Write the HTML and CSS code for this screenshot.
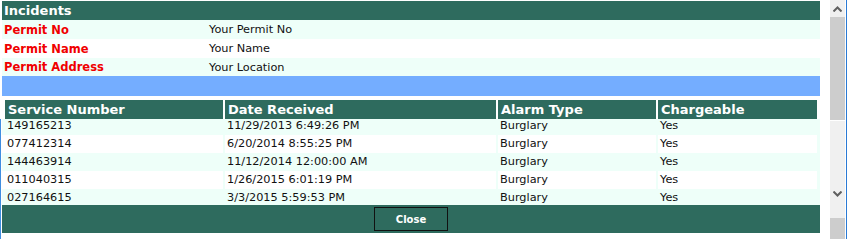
FILE: index.html
```html
<!DOCTYPE html>
<html>
<head>
<meta charset="utf-8">
<link rel="stylesheet" href="styles.css">
</head>
<body>
<div class="frame">
  <div class="panel">
    <div class="title">Incidents</div>
    <div class="info mint r1"><span class="label">Permit No</span><span class="value">Your Permit No</span></div>
    <div class="info r2"><span class="label">Permit Name</span><span class="value">Your Name</span></div>
    <div class="info mint r3"><span class="label">Permit Address</span><span class="value">Your Location</span></div>
    <div class="bluebar"></div>
    <div class="grid-head">
      <div class="hc c1">Service Number</div>
      <div class="hc c2">Date Received</div>
      <div class="hc c3">Alarm Type</div>
      <div class="hc c4">Chargeable</div>
    </div>
    <div class="grid-body">
      <div class="row mint"><div class="dc c1">149165213</div><div class="dc c2">11/29/2013 6:49:26 PM</div><div class="dc c3">Burglary</div><div class="dc c4">Yes</div></div>
      <div class="row white"><div class="dc c1">077412314</div><div class="dc c2">6/20/2014 8:55:25 PM</div><div class="dc c3">Burglary</div><div class="dc c4">Yes</div></div>
      <div class="row mint"><div class="dc c1">144463914</div><div class="dc c2">11/12/2014 12:00:00 AM</div><div class="dc c3">Burglary</div><div class="dc c4">Yes</div></div>
      <div class="row white"><div class="dc c1">011040315</div><div class="dc c2">1/26/2015 6:01:19 PM</div><div class="dc c3">Burglary</div><div class="dc c4">Yes</div></div>
      <div class="row mint"><div class="dc c1">027164615</div><div class="dc c2">3/3/2015 5:59:53 PM</div><div class="dc c3">Burglary</div><div class="dc c4">Yes</div></div>
    </div>
    <div class="footer"><button class="close">Close</button></div>
  </div>
  <div class="scrollbar">
    <div class="sb-btn"><svg width="9" height="6" viewBox="0 0 9 6"><path d="M0.5 5.5 L4.5 1.5 L8.5 5.5" fill="none" stroke="#606060" stroke-width="2"/></svg></div>
    <div class="sb-thumb"></div>
    <div class="sb-track"></div>
    <div class="sb-btn down"><svg width="9" height="6" viewBox="0 0 9 6"><path d="M0.5 0.5 L4.5 4.5 L8.5 0.5" fill="none" stroke="#606060" stroke-width="2"/></svg></div>
    <div class="sb-gap"></div>
    <div class="sb-thumb2"></div>
  </div>
</div>
</body>
</html>
```

FILE: styles.css
```css
html, body {
  margin: 0;
  padding: 0;
  background: #ffffff;
}
body {
  font-family: "DejaVu Sans", Verdana, sans-serif;
  font-size: 11px;
  color: #111;
  width: 847px;
  height: 239px;
  overflow: hidden;
  position: relative;
}
body::before {
  content: "";
  position: absolute;
  left: 0;
  top: 119px;
  width: 1px;
  height: 120px;
  background: #3f8ee0;
}
.frame {
  display: flex;
  align-items: flex-start;
  width: 846px;
  height: 239px;
  border-right: 1px solid #2a7ad5;
}
.panel {
  width: 818px;
  margin-left: 2px;
  margin-top: 1px;
  display: flex;
  flex-direction: column;
}
.title {
  height: 19px;
  background: #2e6b5e;
  color: #ffffff;
  font-weight: bold;
  font-size: 13px;
  line-height: 19px;
  padding-left: 2px;
}
.info {
  display: flex;
  align-items: center;
  background: #ffffff;
}
.info.r1 { height: 19px; }
.info.r2 { height: 19px; }
.info.r3 { height: 18px; }
.info.mint, .row.mint {
  background: #eefff9;
}
.label {
  width: 205px;
  padding-left: 2px;
  color: #f00000;
  font-weight: bold;
  font-size: 11.5px;
}
.value {
  color: #111;
  font-size: 11.3px;
}
.bluebar {
  height: 20px;
  background: #74adff;
}
.grid-head {
  margin-top: 4px;
  margin-left: 3px;
  width: 812px;
  display: flex;
  gap: 2px;
  height: 19px;
  background: #ffffff;
}
.hc {
  background: #2e6b5e;
  color: #ffffff;
  font-weight: bold;
  font-size: 13px;
  line-height: 19px;
  padding-left: 3px;
  box-sizing: border-box;
}
.hc.c1 { width: 218px; }
.hc.c2 { width: 271px; }
.hc.c3 { width: 158px; }
.hc.c4 { width: 159px; }
.grid-body {
  height: 86px;
  overflow: hidden;
  background: #eefff9;
}
.row {
  display: flex;
  gap: 2px;
  height: 18px;
  width: 815px;
}
.row:first-child { margin-top: -2px; }
.row.white .dc { background: #ffffff; }
.row.mint .dc { background: #eefff9; }
.dc {
  line-height: 18px;
  padding-left: 2px;
  box-sizing: border-box;
  font-size: 11.3px;
}
.row .c1 { width: 221px; padding-left: 5px; }
.row .c2 { width: 271px; }
.row .c3 { width: 158px; }
.row .c4 { width: 159px; }
.footer {
  height: 28px;
  background: #2e6b5e;
  display: flex;
  align-items: center;
  justify-content: center;
}
.close {
  width: 74px;
  height: 24px;
  background: #2e6b5e;
  border: 1px solid #111;
  color: #ffffff;
  font-family: "DejaVu Sans", Verdana, sans-serif;
  font-weight: bold;
  font-size: 10px;
  padding: 0;
}
.scrollbar {
  margin-left: 10px;
  width: 15px;
  height: 239px;
  display: flex;
  flex-direction: column;
  background: #f0f0f0;
  border-right: 1px solid #ffffff;
}
.sb-btn {
  height: 17px;
  display: flex;
  align-items: center;
  justify-content: center;
}
.sb-thumb {
  height: 103px;
  background: #cdcdcd;
  border-bottom: 1px solid #ffffff;
}
.sb-track {
  height: 64px;
}
.sb-gap {
  height: 16px;
}
.sb-thumb2 {
  flex: 1;
  background: #cdcdcd;
}
```
